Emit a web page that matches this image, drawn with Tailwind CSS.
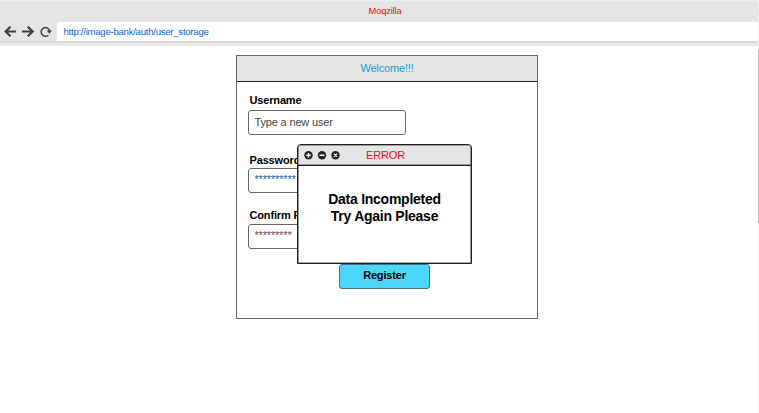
<!DOCTYPE html>
<html lang="en">
<head>
<meta charset="utf-8">
<title>Moqzilla</title>
<script src="https://cdn.jsdelivr.net/npm/@tailwindcss/browser@4"></script>
</head>
<body class="relative flex h-[413px] w-[759px] flex-col overflow-hidden bg-white font-['Liberation_Sans',Arial,sans-serif] text-[11px] tracking-[-0.16px] text-black">
<header class="shrink-0">
  <div class="h-[22px] w-full border-t border-[#eeeeee] bg-[#e5e5e5] pl-[11px] text-center text-[9.33px] leading-[20px] text-[#f01020]">Moqzilla</div>
  <div class="flex h-[19px] bg-[#e5e5e5]">
    <div class="flex w-[57px] items-center gap-[5px] pl-1 text-[#404040]">
      <svg class="h-3 w-[13px]" viewBox="0 0 13 12" fill="none" stroke="currentColor" stroke-width="2.2"><path d="M12 5.5H2M6.5 .7L1.5 5.5l5 4.8"/></svg>
      <svg class="h-3 w-[13px]" viewBox="0 0 13 12" fill="none" stroke="currentColor" stroke-width="2.2"><path d="M0 5.5h10M5.7 .7l5 4.8-5 4.8"/></svg>
      <svg class="h-3 w-3" viewBox="0 0 12 12" fill="none" stroke="currentColor" stroke-width="1.5"><path d="M8.3 9.2A4.3 4.3 0 1 1 9.7 5"/><path d="M6.8 4.6H12L9.4 7.8z" fill="currentColor" stroke="none"/></svg>
    </div>
    <div class="flex-1 bg-white pl-[6.5px] text-[9.6px] leading-[20px] tracking-[-0.26px] text-[#0869e8]">http://image-bank/auth/user_storage</div>
  </div>
  <div class="h-[5px] border-t-2 border-[#d9d9d9] bg-[#e8e8e8]"></div>
</header>
<main class="flex min-h-0 flex-1 items-start">
  <section class="relative ml-[236px] mt-[9px] h-[264px] w-[302px] border border-[#66666a] bg-white">
    <h1 class="h-[26px] border-b border-[#231f20] bg-[#e5e5e5] text-center leading-[25px] text-[#119fda]">Welcome!!!</h1>
    <form class="flex flex-col items-start pl-[11px]">
      <label class="mt-[12px] pl-[1.5px] leading-[12px] font-bold">Username</label>
      <div class="mt-[4px] h-[25px] w-[158px] rounded-[3px] border border-[#66666a] pl-[5.5px] leading-[22px] text-[#444]">Type a new user</div>
      <label class="mt-[19px] pl-[1.5px] leading-[12px] font-bold">Password</label>
      <div class="mt-[2px] h-[25px] w-[158px] rounded-[3px] border border-[#66666a] pl-[5.5px] leading-[21px] text-[#256098]">**********</div>
      <label class="mt-[16px] pl-[1.5px] leading-[12px] font-bold">Confirm P</label>
      <div class="mt-[3px] h-[25px] w-[158px] rounded-[3px] border border-[#66666a] pl-[5.5px] leading-[21px] text-[#8a4050]">*********</div>
      <button type="button" class="ml-[91px] mt-[15px] h-[25px] w-[91px] rounded-[3px] border border-[#3d7486] bg-[#4bd6fc] pb-[3px] leading-[20px] font-bold">Register</button>
    </form>
    <div role="dialog" class="absolute left-[60px] top-[88px] h-[120px] w-[175px] rounded-t-[4px] border border-[#231f20] bg-white shadow-[inset_0_0_0_0.6px_#55555a]">
      <div class="flex h-[21px] items-center rounded-t-[3px] border-b border-[#231f20] bg-[#e5e5e5] pl-[6px] shadow-[inset_0_0_0_0.6px_#55555a]">
        <svg class="h-[9px] w-[37px]" viewBox="0 0 37 9" fill="none" stroke="#f2f2f2" stroke-width="1.4"><g fill="#252529" stroke="none"><circle cx="4.5" cy="4.2" r="4.2"/><circle cx="18" cy="4.2" r="4.2"/><circle cx="31.5" cy="4.2" r="4.2"/></g><path d="M2.2 4.2h4.6M4.5 1.9v4.6M15.5 4.2h5M30 2.7l3 3M33 2.7l-3 3"/></svg>
        <span class="ml-[25px] pb-px leading-[18px] text-[#f01020]">ERROR</span>
      </div>
      <p class="mt-[25px] text-center text-[14px] leading-[17px] tracking-[-0.26px] font-bold">Data Incompleted<br>Try Again Please</p>
    </div>
  </section>
</main>
<div class="absolute right-0 top-0 h-full w-px bg-[#f0f0f0]"><div class="mt-[50px] h-[173px] bg-[#c4c4c4]"></div></div>
</body>
</html>
